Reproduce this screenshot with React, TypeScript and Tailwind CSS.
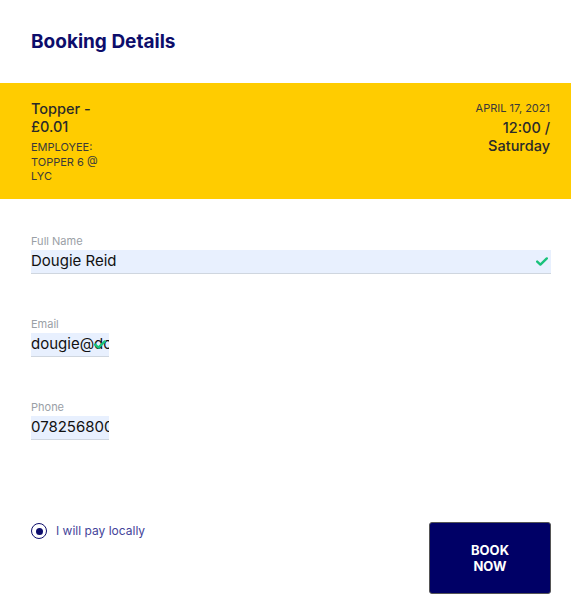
const font = { fontFamily: "Inter, 'Noto Sans', sans-serif" };

function Tick({ className }: { className: string }) {
  return (
    <svg viewBox="0 0 12 9" className={className} fill="none">
      <path d="M1.2 4.6 L4.4 7.6 L10.8 1.4" stroke="#19c27b" strokeWidth="2.4" strokeLinecap="round" strokeLinejoin="round" />
    </svg>
  );
}

function Field({
  label,
  value,
  width,
  check,
}: {
  label: string;
  value: string;
  width: string;
  check?: boolean;
}) {
  return (
    <div className="flex flex-col">
      <label className="text-[11px] leading-[14px] text-[#9aa0a6]">{label}</label>
      <div
        className={`relative mt-[2px] flex h-[24px] items-center overflow-hidden border-b border-[#cfd6df] bg-[#e8f0fe] ${width}`}
      >
        <span className="whitespace-nowrap text-[15px] text-[#111]">{value}</span>
        {check && <Tick className="absolute right-[3px] h-[9px] w-[12px]" />}
      </div>
    </div>
  );
}

export default function App() {
  return (
    <div className="min-h-[607px] w-[571px] bg-white" style={font}>
      <h1 className="px-[31px] pt-[30px] text-[19px] font-bold leading-[24px] text-[#0d0d6b]">
        Booking Details
      </h1>

      <div className="mt-[29px] flex h-[116px] justify-between bg-[#ffcc00] pl-[31px] pr-[21px] pt-[17px]">
        <div className="w-[80px]">
          <p className="text-[14.5px] font-medium leading-[17.5px] text-[#2a2a2a]">
            Topper -
            <br />
            £0.01
          </p>
          <p className="mt-[5px] text-[11px] uppercase leading-[14.5px] text-[#3a3a3a]">
            Employee:
            <br />
            Topper 6 @
            <br />
            LYC
          </p>
        </div>
        <div className="flex w-[90px] flex-col items-end pt-[1px] text-right">
          <p className="text-[11px] uppercase leading-[14px] text-[#3a3a3a]">
            April 17, 2021
          </p>
          <p className="mt-[4px] text-[14.5px] font-medium leading-[18px] text-[#2a2a2a]">
            12:00 /
            <br />
            Saturday
          </p>
        </div>
      </div>

      <div className="flex flex-col gap-[43px] pl-[31px] pr-[20px] pt-[35px]">
        <Field label="Full Name" value="Dougie Reid" width="w-[520px]" check />
        <Field label="Email" value="dougie@domain.com" width="w-[78px]" check />
        <Field label="Phone" value="07825680000" width="w-[78px]" />
      </div>

      <div className="mt-[82px] flex items-start justify-between pl-[31px] pr-[20px]">
        <label className="flex items-center gap-[9px]">
          <span className="flex h-[16px] w-[16px] items-center justify-center rounded-full border-[1.5px] border-[#0d0d6b]">
            <span className="h-[7px] w-[7px] rounded-full bg-[#0d0d6b]" />
          </span>
          <span className="text-[12px] text-[#44449a]">I will pay locally</span>
        </label>
        <button className="flex h-[72px] w-[122px] items-center justify-center rounded-[3px] border border-[#555] bg-[#000066] text-[13px] font-bold leading-[16px] text-white">
          BOOK
          <br />
          NOW
        </button>
      </div>
    </div>
  );
}
